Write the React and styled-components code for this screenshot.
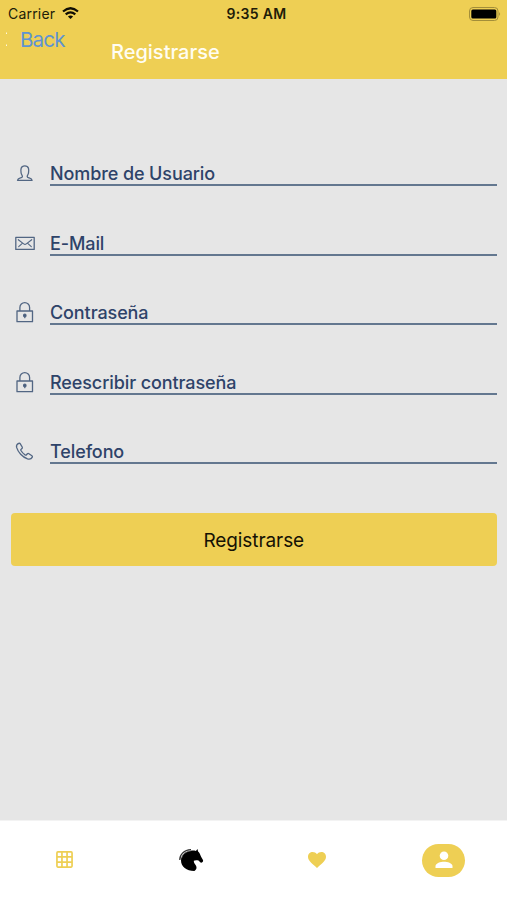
import React from "react";
import styled, { createGlobalStyle } from "styled-components";

const GlobalStyle = createGlobalStyle`
  * {
    box-sizing: border-box;
  }

  body {
    margin: 0;
    font-family: Inter, Roboto, sans-serif;
  }
`;

const Screen = styled.div`
  display: flex;
  flex-direction: column;
  height: 900px;
  overflow: hidden;
  background: #e6e6e6;
`;

const Header = styled.header`
  height: 79px;
  background: #eecf54;
`;

const StatusBar = styled.div`
  display: grid;
  grid-template-columns: 1fr auto 1fr;
  align-items: center;
  height: 27px;
  padding: 0 6px 0 8px;
  color: #211c08;
`;

const Carrier = styled.div`
  display: flex;
  align-items: center;
  gap: 7px;
  font-size: 14px;
  letter-spacing: 0.2px;
`;

const Clock = styled.div`
  font-size: 14px;
  font-weight: 600;
  letter-spacing: 0.35px;
  padding-left: 4px;
`;

const Battery = styled.svg`
  justify-self: end;
`;

const NavBar = styled.div`
  display: flex;
  align-items: flex-start;
  height: 52px;
  padding-left: 5px;
`;

const BackMark = styled.svg`
  flex: none;
  margin-top: 4px;
`;

const BackLink = styled.a`
  width: 102px;
  padding-left: 11px;
  color: #5f93d2;
  font-size: 20.5px;
  line-height: 26px;
  letter-spacing: -0.8px;
  cursor: pointer;
`;

const Title = styled.h1`
  margin: 12px 0 0;
  color: #fffdf2;
  font-size: 20px;
  font-weight: 500;
  line-height: 26px;
  letter-spacing: 0;
`;

const Form = styled.form`
  flex: 1;
  padding: 37.4px 10px 0;
`;

const Field = styled.label`
  display: flex;
  align-items: flex-end;
  height: 69.6px;
`;

const FieldIcon = styled.svg`
  flex: none;
  width: 30px;
  height: 24px;
  margin-right: 10px;
  fill: none;
  stroke: #526683;
  stroke-width: 1.3;
  stroke-linecap: round;
  stroke-linejoin: round;
`;

const FieldText = styled.span`
  flex: 1;
  height: 26px;
  border-bottom: 2px solid #63778f;
  color: #2e4369;
  font-size: 18px;
  font-weight: 500;
  line-height: 27px;
  letter-spacing: -0.1px;
`;

const SubmitButton = styled.button`
  display: block;
  width: 486.5px;
  height: 53px;
  margin: 48.6px 0 0 0.5px;
  padding: 2px 0 0;
  border: none;
  border-radius: 4px;
  background: #eecf54;
  color: #151204;
  font-family: inherit;
  font-size: 19px;
  letter-spacing: -0.08px;
  cursor: pointer;
`;

const TabBar = styled.nav`
  display: grid;
  grid-template-columns: repeat(4, 1fr);
  height: 80px;
  border-top: 1px solid #f3f3f3;
  background: white;
`;

const Tab = styled.a`
  display: flex;
  align-items: center;
  justify-content: center;
  padding: 0 0 ${(props) => (props.$active ? 0 : 2)}px ${(props) => props.$inset || 0}px;
  cursor: pointer;
`;

const ActivePill = styled.span`
  display: flex;
  align-items: center;
  justify-content: center;
  width: 43px;
  height: 33px;
  padding-bottom: 2px;
  border-radius: 17px;
  background: #eecf54;
`;

const UserShape = () => (
  <path d="M7.500 18.300c.2-1.600 1.500-1.900 3.200-2.400.9-.3 1.700-.6 1.700-1.500 0-1-1-1.700-1.300-3.400-.5-3.200-.6-7.200 3.700-7.200s4.200 4 3.700 7.200c-.3 1.700-1.300 2.400-1.300 3.400 0 .9.800 1.200 1.700 1.500 1.700.5 3 .8 3.200 2.400z" />
);

const MailShape = () => (
  <>
    <path d="M5.800 5.400h18.400v12H5.800z" />
    <path d="M8.300 7.700l5.400 4.200q1.300 1 2.600 0l5.400-4.200M8.700 14.700l3.300-3M21.300 14.700l-3.300-3" strokeWidth="1.100" />
  </>
);

const LockShape = () => (
  <>
    <path d="M7 10h15.500v10.700H7zM9.900 10V6.500a4.850 4.850 0 0 1 9.700 0V10" />
    <circle cx="14.800" cy="14.400" r="1.200" fill="#2e4369" />
    <path d="M14.800 14.700v2" />
  </>
);

const PhoneShape = () => (
  <path d="M8.700 3.400c-1.700.8-2.600 2-2.100 4 1.400 4.700 5.800 9.800 10.900 11.400 2.200.6 3.900.1 4.800-1.700.3-.6.1-1-.4-1.400l-3-2c-.6-.4-1.100-.3-1.500.1l-.9 1c-.4.500-.9.400-1.400.1-1.700-1.200-3.100-2.600-4.200-4.400-.3-.5-.3-.9.200-1.300l.9-.8c.5-.4.500-.9.200-1.400l-1.900-3.200c-.3-.5-.9-.7-1.600-.4z" />
);

const fields = [
  { label: "Nombre de Usuario", Shape: UserShape },
  { label: "E-Mail", Shape: MailShape },
  { label: "Contraseña", Shape: LockShape },
  { label: "Reescribir contraseña", Shape: LockShape },
  { label: "Telefono", Shape: PhoneShape },
];

const App = () => {
  return (
    <Screen>
      <GlobalStyle />
      <Header>
        <StatusBar>
          <Carrier>
            Carrier
            <svg width="17" height="13" viewBox="0 0 17 13" fill="none" stroke="#100e04" strokeWidth="2.2">
              <path d="M1 4.500Q8.500-2 16 4.500M3.700 7.400Q8.500 3.300 13.300 7.400" />
              <path d="M5.900 9.500Q8.500 7.300 11.100 9.500L8.500 12z" fill="#100e04" stroke="none" />
            </svg>
          </Carrier>
          <Clock>9:35 AM</Clock>
          <Battery width="33" height="14" viewBox="0 0 33 14">
            <rect x="1.500" y=".5" width="28.500" height="13" rx="3.500" fill="none" stroke="#a38e39" />
            <rect x="3.300" y="2.500" width="25" height="9" rx="1.500" fill="#000" />
            <path d="M31.300 5q1.700 2 0 4z" fill="#8b7930" />
          </Battery>
        </StatusBar>
        <NavBar>
          <BackMark width="4" height="18" viewBox="0 0 4 18">
            <path d="M1.500 1.500v1.500M1.500 13.500v1.500" stroke="#fff8dc" />
          </BackMark>
          <BackLink>Back</BackLink>
          <Title>Registrarse</Title>
        </NavBar>
      </Header>

      <Form>
        {fields.map(({ label, Shape }) => (
          <Field key={label}>
            <FieldIcon viewBox="0 0 30 24">
              <Shape />
            </FieldIcon>
            <FieldText>{label}</FieldText>
          </Field>
        ))}
        <SubmitButton type="button">Registrarse</SubmitButton>
      </Form>

      <TabBar>
        <Tab $inset={2}>
          <svg width="17" height="17" viewBox="0 0 18 18" fill="none" stroke="#eecf54" strokeWidth="1.800">
            <rect x="1" y="1" width="16" height="16" rx="1" />
            <path d="M6.300 1v16M11.700 1v16M1 6.300h16M1 11.700h16" />
          </svg>
        </Tab>
        <Tab $inset={1}>
          <svg width="26" height="24" viewBox="0 0 26 24">
            <path d="M19.500 1l.6 2.500c1.500 1.300 2.100 3.300 3 5.200l2 3.600c.3 1.400-1.300 2.800-2.600 2.300l-2-2.100c-2-.4-3.500-.4-4.700.3 0 3.400 3 4.300 2.700 7.200-.2 1.500-1.200 2.300-2.200 3C8.500 23 3 18.500 3 12.500 3 6 8.500 2.500 14.500 2.600c1.600 0 2.500.1 3.400.3z" fill="#000" />
            <path d="M1.800 12C1.600 6.500 6 1.900 13 1.700" fill="none" stroke="#333" strokeWidth="1.300" />
            <path d="M3.500 10C4.600 6 8 3.400 12.700 2.900" fill="none" stroke="#999" strokeWidth=".6" />
          </svg>
        </Tab>
        <Tab>
          <svg width="20" height="18" viewBox="0 0 20 18" fill="#eecf54">
            <path d="M10 17L8.700 15.800C4 11.700 1 9 1 5.700 1 3 3.100 1 5.700 1 7.300 1 9 1.900 10 3.200 11 1.900 12.700 1 14.300 1 16.900 1 19 3 19 5.700c0 3.300-3 6-7.700 10.100z" />
          </svg>
        </Tab>
        <Tab $active>
          <ActivePill>
            <svg width="18" height="18" viewBox="0 0 18 18" fill="#fff">
              <circle cx="9" cy="4.800" r="4.300" />
              <path d="M.5 17v-2c0-2.900 5.200-4.300 8.500-4.300s8.500 1.400 8.500 4.300v2z" />
            </svg>
          </ActivePill>
        </Tab>
      </TabBar>
    </Screen>
  );
};

export default App;
